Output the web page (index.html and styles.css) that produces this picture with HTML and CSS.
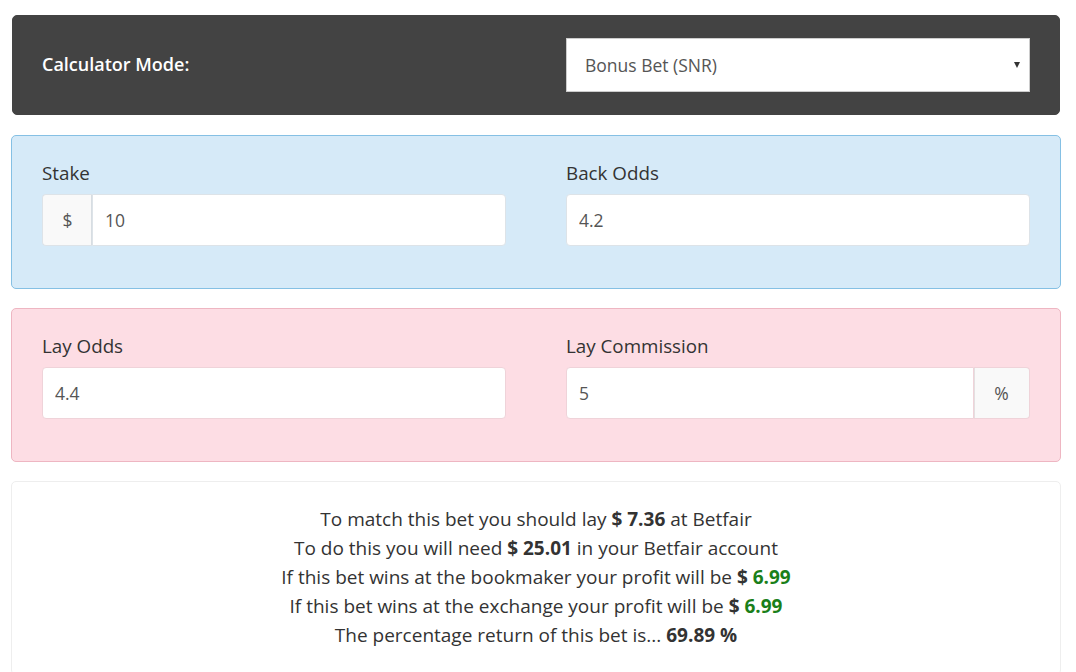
FILE: index.html
```html
<!DOCTYPE html>
<html lang="en">
<head>
<meta charset="utf-8">
<title>Matched Betting Calculator</title>
<link rel="stylesheet" href="styles.css">
</head>
<body>
<div class="wrap">
  <div class="panel panel-dark">
    <label class="mode-label" for="mode">Calculator Mode:</label>
    <div class="select-wrap">
      <select id="mode" class="select">
        <option>Bonus Bet (SNR)</option>
        <option>Normal Bet</option>
        <option>Bonus Bet (SR)</option>
      </select>
    </div>
  </div>

  <div class="panel panel-back">
    <div class="field">
      <label class="label" for="stake">Stake</label>
      <div class="input-group">
        <span class="addon addon-left">$</span>
        <input id="stake" class="input input-right" type="text" value="10">
      </div>
    </div>
    <div class="field">
      <label class="label" for="back">Back Odds</label>
      <input id="back" class="input" type="text" value="4.2">
    </div>
  </div>

  <div class="panel panel-lay">
    <div class="field">
      <label class="label" for="lay">Lay Odds</label>
      <input id="lay" class="input" type="text" value="4.4">
    </div>
    <div class="field">
      <label class="label" for="comm">Lay Commission</label>
      <div class="input-group">
        <input id="comm" class="input input-left" type="text" value="5">
        <span class="addon addon-right">%</span>
      </div>
    </div>
  </div>

  <div class="panel panel-result">
    <p class="line">To match this bet you should lay <b>$ 7.36</b> at Betfair</p>
    <p class="line">To do this you will need <b>$ 25.01</b> in your Betfair account</p>
    <p class="line">If this bet wins at the bookmaker your profit will be <b>$ <span class="pos">6.99</span></b></p>
    <p class="line">If this bet wins at the exchange your profit will be <b>$ <span class="pos">6.99</span></b></p>
    <p class="line">The percentage return of this bet is... <b>69.89 %</b></p>
  </div>
</div>
</body>
</html>
```

FILE: styles.css
```css
* { box-sizing: border-box; }

html, body {
  margin: 0;
  padding: 0;
  background: #ffffff;
}

body {
  font-family: "Open Sans", "Liberation Sans", Arial, sans-serif;
  color: #333333;
}

.wrap {
  width: 1076px;
  padding: 15px 15px 0 11px;
}

.panel {
  border-radius: 5px;
  border: 1px solid transparent;
  display: grid;
  grid-template-columns: 464px 464px;
  column-gap: 60px;
  margin-bottom: 19px;
}

.panel-dark {
  background: #434343;
  border-color: #434343;
  margin: 0 1px 20px 1px;
  padding: 22px 29px;
  align-items: center;
  height: 100px;
}

.mode-label {
  color: #ffffff;
  font-size: 18px;
  font-weight: 600;
  margin-top: -2px;
}

.select-wrap {
  position: relative;
}

.select {
  display: block;
  width: 464px;
  height: 54px;
  margin: 0;
  padding: 0 18px;
  font-family: inherit;
  font-size: 17.5px;
  color: #555555;
  background: #ffffff;
  border: 1px solid #cccccc;
  border-radius: 0;
  -webkit-appearance: none;
  appearance: none;
  outline: none;
}

.select-wrap::after {
  content: "";
  position: absolute;
  right: 10px;
  top: 24px;
  border-left: 3.5px solid transparent;
  border-right: 3.5px solid transparent;
  border-top: 6px solid #333333;
}

.panel-back {
  background: #d6eaf8;
  border-color: #85c0e4;
  padding: 24px 30px 42px 30px;
}

.panel-lay {
  background: #fddde4;
  border-color: #eeb6c2;
  padding: 24px 30px 42px 30px;
}

.field {
  display: flex;
  flex-direction: column;
}

.label {
  font-size: 18.8px;
  line-height: 26px;
  margin-bottom: 8px;
  color: #333333;
}

.input-group {
  display: flex;
  height: 52px;
}

.input {
  display: block;
  width: 100%;
  height: 52px;
  margin: 0;
  padding: 0 12px;
  font-family: inherit;
  font-size: 17.5px;
  color: #555555;
  background: #ffffff;
  border: 1px solid #dde3e8;
  border-radius: 4px;
  outline: none;
}

.panel-lay .input {
  border-color: #efd3d9;
}

.input-right {
  border-top-left-radius: 0;
  border-bottom-left-radius: 0;
  flex: 1;
}

.input-left {
  border-top-right-radius: 0;
  border-bottom-right-radius: 0;
  flex: 1;
}

.addon {
  flex: 0 0 auto;
  display: flex;
  align-items: center;
  justify-content: center;
  background: #f9f9f9;
  color: #555555;
  font-size: 17.5px;
  border: 1px solid #dde3e8;
}

.addon-left {
  width: 50px;
  border-right: 0;
  border-radius: 4px 0 0 4px;
  box-shadow: inset -1px 0 0 #d7dde2;
}

.addon-right {
  width: 56px;
  border-left: 0;
  border-radius: 0 4px 4px 0;
  border-color: #efd3d9;
  box-shadow: inset 1px 0 0 #e4e0e1;
}

.panel-result {
  display: block;
  background: #ffffff;
  border-color: #eeeeee;
  padding: 23px 30px 24px 30px;
  margin-bottom: 0;
  text-align: center;
}

.line {
  margin: 0;
  font-size: 19px;
  line-height: 29px;
  color: #333333;
}

.line b {
  font-weight: 700;
}

.pos {
  color: #1a7f1a;
}
```
